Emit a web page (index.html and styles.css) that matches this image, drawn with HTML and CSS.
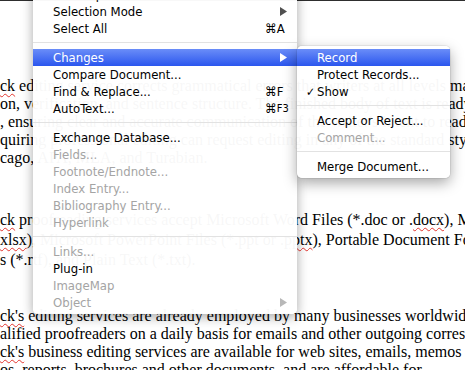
FILE: index.html
```html
<!DOCTYPE html>
<html lang="en">
<head>
    <meta charset="UTF-8">
    <title>Insert menu</title>
    <link rel="stylesheet" href="styles.css">
</head>
<body>
    <div class="topbar"></div>

    <div class="doc">
        <div class="para">
            <div class="line"><span class="typo">ck</span> editing service corrects grammatical errors that writers at all levels may ove</div>
            <div class="line">on, verification, and sentence structure. The finished body of text is ready a</div>
            <div class="line">, ensuring clear and accurate communication of the writer's intent to readers w</div>
            <div class="line">quiring professional editing can request editing in any of the standard styles an</div>
            <div class="line">cago, APA, MLA, and Turabian.</div>
        </div>
        <div class="para para-files">
            <div class="line"><span class="typo">ck</span> proofreading services accept Microsoft Word Files (*.doc or .<span class="typo">docx</span>), M</div>
            <div class="line"><span class="typo">xlsx</span>), Microsoft PowerPoint Files (*.ppt or .<span class="typo">pptx</span>), Portable Document Fo</div>
            <div class="line">s (*.rtf), and Plain Text (*.txt).</div>
        </div>
        <div class="para para-business">
            <div class="line"><span class="typo">ck's</span> editing services are already employed by many businesses worldwide</div>
            <div class="line">alified proofreaders on a daily basis for emails and other outgoing corres</div>
            <div class="line"><span class="typo">ck's</span> business editing services are available for web sites, emails, memos</div>
            <div class="line">os, reports, brochures and other documents, and are affordable for</div>
        </div>
    </div>

    <!-- Insert menu with the Changes submenu open -->
    <div class="menu">
        <div class="item"><span class="label">Paste Special...</span><span class="key">&#8984;V</span></div>
        <div class="item"><span class="label">Selection Mode</span><span class="key"><svg class="arrow" width="7" height="9" viewBox="0 0 7 9"><path d="M0 0L7 4.5L0 9Z"/></svg></span></div>
        <div class="item"><span class="label">Select All</span><span class="key">&#8984;A</span></div>
        <div class="sep"></div>
        <div class="item on">
            <span class="label">Changes</span><span class="key"><svg class="arrow" width="7" height="9" viewBox="0 0 7 9"><path d="M0 0L7 4.5L0 9Z"/></svg></span>
            <div class="submenu">
                <div class="item on"><span class="label">Record</span></div>
                <div class="item"><span class="label">Protect Records...</span></div>
                <div class="item"><span class="check">&#10003;</span><span class="label">Show</span></div>
                <div class="sep"></div>
                <div class="item"><span class="label">Accept or Reject...</span></div>
                <div class="item off"><span class="label">Comment...</span></div>
                <div class="sep"></div>
                <div class="item"><span class="label">Merge Document...</span></div>
            </div>
        </div>
        <div class="item"><span class="label">Compare Document...</span></div>
        <div class="item"><span class="label">Find &amp; Replace...</span><span class="key">&#8984;F</span></div>
        <div class="item"><span class="label">AutoText...</span><span class="key">&#8984;<span class="fn">F3</span></span></div>
        <div class="sep"></div>
        <div class="item"><span class="label">Exchange Database...</span></div>
        <div class="item off"><span class="label">Fields...</span></div>
        <div class="item off"><span class="label">Footnote/Endnote...</span></div>
        <div class="item off"><span class="label">Index Entry...</span></div>
        <div class="item off"><span class="label">Bibliography Entry...</span></div>
        <div class="item off"><span class="label">Hyperlink</span></div>
        <div class="sep"></div>
        <div class="item off"><span class="label">Links...</span></div>
        <div class="item"><span class="label">Plug-in</span></div>
        <div class="item off"><span class="label">ImageMap</span></div>
        <div class="item off"><span class="label">Object</span><span class="key"><svg class="arrow" width="7" height="9" viewBox="0 0 7 9"><path d="M0 0L7 4.5L0 9Z"/></svg></span></div>
    </div>
</body>
</html>
```

FILE: styles.css
```css
body {
    margin: 0;
    height: 370px;
    overflow: hidden;
    position: relative;
    background-color: #ffffff;
    font-family: "Liberation Serif", serif;
}

.topbar {
    height: 1px;
    background-color: #2e2e2e;
}

.doc {
    padding-top: 76px;
    font-size: 16px;
    color: #000;
    overflow: hidden;
}

.para {
    line-height: 18px;
    white-space: nowrap;
}

.para-files {
    margin-top: 43px;
    line-height: 20px;
}

.para-business {
    margin-top: 37px;
}

.typo {
    text-decoration: underline wavy #e2352f;
    text-decoration-thickness: 1px;
    text-underline-offset: 2px;
}

/* menus */
.menu {
    position: absolute;
    left: 33px;
    top: -14px;
    width: 264px;
    padding-bottom: 3px;
    background-color: rgba(255, 255, 255, 0.97);
    border-radius: 0 0 5px 5px;
    box-shadow: 0 3px 12px rgba(0, 0, 0, 0.35);
    font-family: "DejaVu Sans Condensed", "DejaVu Sans", sans-serif;
    font-stretch: condensed;
    font-size: 13px;
    color: #000;
}

.item {
    display: grid;
    grid-template-columns: 20px 1fr 22px 10px;
    align-items: center;
    height: 17px;
    position: relative;
    white-space: nowrap;
}

.item .label {
    grid-column: 2;
}

.item .key {
    grid-column: 3;
    display: flex;
    align-items: center;
}

.item .check {
    grid-column: 1;
    padding-left: 9px;
    font-size: 12px;
}

.fn {
    font-size: 11px;
}

.arrow {
    display: block;
    margin-left: auto;
    fill: #505050;
}

.item.on {
    background: linear-gradient(#6a8df8, #2b56ee);
    color: #fff;
}

.item.on .arrow {
    fill: #fff;
}

.item.off {
    color: #a4a4a4;
}

.item.off .arrow {
    fill: #b8b8b8;
}

.sep {
    height: 1px;
    margin: 5px 0 6px;
    background-color: #e2e2e2;
}

.submenu {
    position: absolute;
    left: 264px;
    top: -3px;
    width: 153px;
    padding: 3px 0;
    background-color: rgba(255, 255, 255, 0.97);
    border-radius: 5px;
    box-shadow: 0 0 0 1px rgba(0, 0, 0, 0.06), 0 5px 14px rgba(0, 0, 0, 0.35);
    color: #000;
}

.submenu .item {
    grid-template-columns: 20px 1fr;
}
```
